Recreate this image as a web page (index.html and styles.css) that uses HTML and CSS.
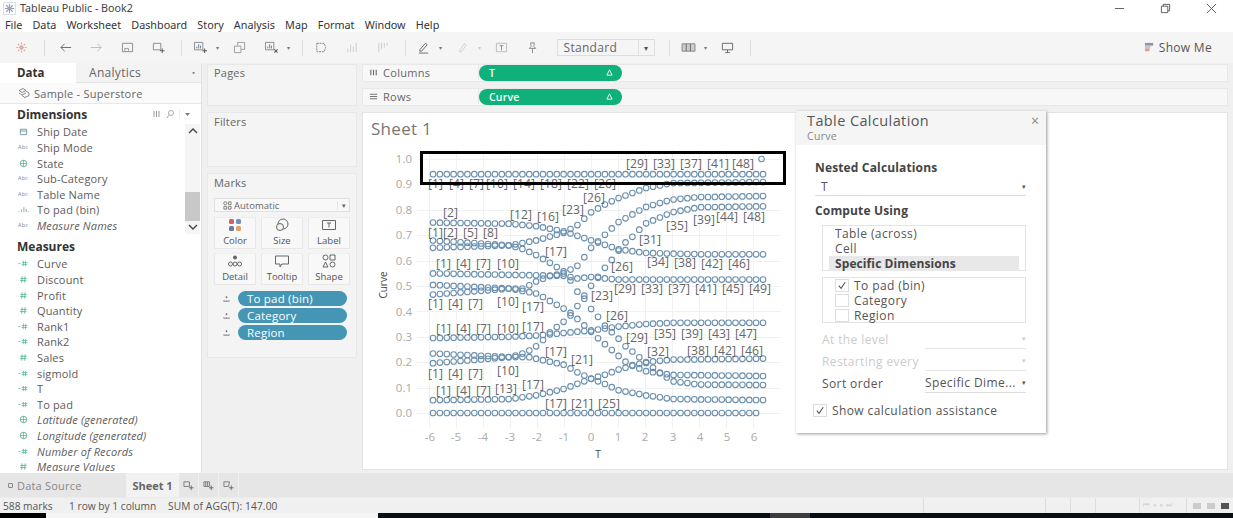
FILE: index.html
```html
<!DOCTYPE html>
<html lang="en">
<head>
<meta charset="utf-8">
<title>Tableau Public - Book2</title>
<link rel="stylesheet" href="styles.css">
</head>
<body>
<svg class="sprite" aria-hidden="true">
  <symbol id="i-num" viewBox="0 0 10 10"><path d="M3.5 1.5 3 8.5M6.8 1.5 6.3 8.5M1.5 3.8h7M1.2 6.2h7" fill="none" stroke="#5fb79a" stroke-width="1"/></symbol>
  <symbol id="i-calc" viewBox="0 0 14 10"><path d="M7 1.5 6.6 8.5M9.8 1.5 9.4 8.5M5 3.8h7M4.8 6.2h7M.5 5h2.5" fill="none" stroke="#5fb79a" stroke-width="1"/></symbol>
  <symbol id="i-globe" viewBox="0 0 10 10"><circle cx="5" cy="5" r="3.6" fill="none" stroke="#5fa88f"/><path d="M1.4 5h7.2M5 1.4v7.2" stroke="#5fa88f" fill="none" stroke-width=".8"/></symbol>
  <symbol id="i-bar" viewBox="0 0 14 10"><path d="M1.5 8v-1M4.5 8V5M7.5 8V2M10.5 8V4M13 8V7" stroke="#6f93a6" stroke-width="1" fill="none"/></symbol>
  <symbol id="i-add" viewBox="0 0 16 14"><path d="M1.5 1.5h9v8h-9z" fill="none" stroke="#888"/><path d="M4 8V6M6 8V3.5M8 8V5" stroke="#5b7f96" stroke-width="1"/><path d="M12.5 8v5M10 10.5h5" stroke="#555" stroke-width="1.1"/></symbol>
  <symbol id="i-dot" viewBox="0 0 12 10"><path d="M6 1.5v2.5M2.5 8h7" stroke="#777" fill="none"/><circle cx="6" cy="2.5" r="1.2" fill="#777"/><path d="M1.5 7.5h2M5 7.5h2M8.5 7.5h2" stroke="#777"/></symbol>
  <symbol id="i-delta" viewBox="0 0 8 8"><path d="M4 1 7 7H1z" fill="none" stroke="#fff" stroke-width="1"/></symbol>
  <symbol id="i-check" viewBox="0 0 12 12"><path d="M2.5 6.2 5 9l4.5-6.5" fill="none" stroke="#555" stroke-width="1.2"/></symbol>
</svg>

<div class="app">
  <header class="titlebar">
    <svg class="logo" viewBox="0 0 14 14"><path d="M.5.5h13v13H.5z" fill="none" stroke="#d5dde3"/><path d="M7 2v10M2 7h10M3.500 3.500l7 7M10.500 3.500l-7 7" stroke="#7ba7c6" stroke-width="1.200"/><path d="M7 5v4M5 7h4" stroke="#d9928c" stroke-width="1.100"/></svg>
    <span class="title">Tableau Public - Book2</span>
    <div class="winctl">
      <svg viewBox="0 0 12 12"><path d="M1 6h10" stroke="#555"/></svg>
      <svg viewBox="0 0 12 12"><path d="M1.5 3.5h7v7h-7zM3.5 3.5v-2h7v7h-2" fill="none" stroke="#555"/></svg>
      <svg viewBox="0 0 12 12"><path d="M1 1l10 10M11 1 1 11" stroke="#555"/></svg>
    </div>
  </header>
  <nav class="menubar">
    <span>File</span><span>Data</span><span>Worksheet</span><span>Dashboard</span><span>Story</span><span>Analysis</span><span>Map</span><span>Format</span><span>Window</span><span>Help</span>
  </nav>
  <div class="toolbar">
    <svg class="tb" viewBox="0 0 14 14"><path d="M7 1.500v11M1.500 7h11M3 3l8 8M11 3l-8 8" stroke="#dba5a1" stroke-width="1.200" stroke-dasharray="2 1"/></svg>
    <i class="sep"></i>
    <svg class="tb tb-back" viewBox="0 0 14 14"><path d="M13 7H2M6 3 2 7l4 4" fill="none" stroke="#666"/></svg>
    <svg class="tb" viewBox="0 0 14 14"><path d="M1 7h11M8 3l4 4-4 4" fill="none" stroke="#bbb"/></svg>
    <svg class="tb" viewBox="0 0 14 14"><path d="M1.5 2.5h11v9h-11z" fill="none" stroke="#888"/><path d="M4 11V8h4v3" fill="none" stroke="#999"/></svg>
    <svg class="tb" viewBox="0 0 14 14"><path d="M1.5 2.5h8v7h-8z" fill="none" stroke="#888"/><path d="M11 8v5M8.5 10.5h5" stroke="#555"/></svg>
    <i class="sep"></i>
    <svg class="tb-s"><use href="#i-add"/></svg><b class="mini">▾</b>
    <svg class="tb" viewBox="0 0 14 14"><path d="M1.5 5.5h7v7h-7zM5 5V1.5h7.5V9H9" fill="none" stroke="#999"/></svg>
    <svg class="tb-s" viewBox="0 0 16 14"><path d="M1.5 1.5h9v8h-9z" fill="none" stroke="#888"/><path d="M4 8V6M6 8V3.5M8 8V5" stroke="#5b7f96"/><path d="M11 9l3.5 3.5M14.5 9 11 12.5" stroke="#555" stroke-width="1.1"/></svg><b class="mini">▾</b>
    <i class="sep"></i>
    <svg class="tb" viewBox="0 0 14 14"><path d="M3 2.5h8l1.5 4.5L11 11.5H3z" fill="none" stroke="#777" stroke-dasharray="2 1"/></svg>
    <svg class="tb" viewBox="0 0 14 14"><path d="M3 12V8M6 12V4M9 12V6M12 12V2" stroke="#ccc" fill="none"/></svg>
    <svg class="tb" viewBox="0 0 14 14"><path d="M3 2v10M6 2v7M9 2v5M12 2v3" stroke="#ccc" fill="none"/></svg>
    <i class="sep"></i>
    <svg class="tb tb-m" viewBox="0 0 14 14"><path d="M3 9.500 9 2.500l2 1.500-6 7H3zM2 13h10" fill="none" stroke="#666"/></svg><b class="mini">▾</b>
    <svg class="tb tb-m" viewBox="0 0 14 14"><path d="M4 10l5-7 2 1.500-5 7-2 0z" fill="none" stroke="#ccc"/></svg><b class="mini light">▾</b>
    <svg class="tb" viewBox="0 0 14 14"><path d="M1.500 2.500h11v9h-11z" fill="none" stroke="#bbb"/><path d="M5 5h4M7 5v5" stroke="#888"/></svg>
    <svg class="tb" viewBox="0 0 14 14"><path d="M5 2h4l-.5 4 2 2H3.500l2-2zM7 8v5" fill="none" stroke="#888"/></svg>
    <div class="fit"><span>Standard</span><b>▾</b></div>
    <i class="sep"></i>
    <svg class="tb-s" viewBox="0 0 16 14"><path d="M1 3h14v8H1z" fill="#ccc" stroke="#888"/><path d="M5.500 3v8M10 3v8" stroke="#666"/></svg><b class="mini">▾</b>
    <svg class="tb" viewBox="0 0 14 14"><path d="M1.500 2.500h11v7h-11zM7 9.500v3M4.500 12.500h5" fill="none" stroke="#666"/></svg>
    <i class="sep"></i>
    <div class="showme">
      <svg viewBox="0 0 12 12"><path d="M1 1h9v3H1z" fill="#8f95a5"/><path d="M1 4h6v3H1z" fill="#c4c6cf"/><path d="M1 7h5v3H1z" fill="#e19a9a"/></svg>
      <span>Show Me</span>
    </div>
  </div>

  <main class="workspace">
    <aside class="datapane">
      <div class="panetabs">
        <span class="tab-on">Data</span>
        <span class="tab-off">Analytics<b>▪</b></span>
      </div>
      <div class="source">
        <svg viewBox="0 0 12 12"><path d="M1 3.500 5 1.500l3 2-4 2zM1 6l3 2 4-2M4 8.500l3 2 4-2V6L8 4" fill="none" stroke="#888"/></svg>
        Sample - Superstore
      </div>
      <div class="dimblock">
        <div class="sechead"><span>Dimensions</span>
          <svg class="headicons" viewBox="0 0 44 10"><path d="M1 2v6M3.500 2v6M6 2v6" stroke="#999"/><circle cx="18" cy="4" r="2.500" fill="none" stroke="#aaa"/><path d="M16 6l-2 3" stroke="#aaa"/><path d="M26.500 0v10" stroke="#eee"/><path d="M32 4h5l-2.500 3z" fill="#777"/></svg>
        </div>
        <div class="scroller">
          <ul class="fields">
            <li><svg viewBox="0 0 10 10"><path d="M1.500 2.500h7v6h-7zM1.500 4.500h7" fill="none" stroke="#6f93a6"/></svg>Ship Date</li>
            <li><i class="abc">Abc</i>Ship Mode</li>
            <li><svg><use href="#i-globe"/></svg>State</li>
            <li><i class="abc">Abc</i>Sub-Category</li>
            <li><i class="abc">Abc</i>Table Name</li>
            <li><svg><use href="#i-bar"/></svg>To pad (bin)</li>
            <li class="ital"><i class="abc">Abc</i>Measure Names</li>
          </ul>
          <div class="scrollbar">
            <svg viewBox="0 0 10 6"><path d="M1 5l4-4 4 4" fill="none" stroke="#444" stroke-width="1.4"/></svg>
            <div class="thumb"></div>
            <svg viewBox="0 0 10 6"><path d="M1 1l4 4 4-4" fill="none" stroke="#444" stroke-width="1.4"/></svg>
          </div>
        </div>
      </div>
      <div class="sechead measures"><span>Measures</span></div>
      <ul class="fields">
        <li><svg><use href="#i-calc"/></svg>Curve</li>
        <li><svg><use href="#i-num"/></svg>Discount</li>
        <li><svg><use href="#i-num"/></svg>Profit</li>
        <li><svg><use href="#i-num"/></svg>Quantity</li>
        <li><svg><use href="#i-calc"/></svg>Rank1</li>
        <li><svg><use href="#i-calc"/></svg>Rank2</li>
        <li><svg><use href="#i-num"/></svg>Sales</li>
        <li><svg><use href="#i-calc"/></svg>sigmold</li>
        <li><svg><use href="#i-calc"/></svg>T</li>
        <li><svg><use href="#i-calc"/></svg>To pad</li>
        <li class="ital"><svg><use href="#i-globe"/></svg>Latitude (generated)</li>
        <li class="ital"><svg><use href="#i-globe"/></svg>Longitude (generated)</li>
        <li class="ital"><svg><use href="#i-calc"/></svg>Number of Records</li>
        <li class="ital"><svg><use href="#i-num"/></svg>Measure Values</li>
      </ul>
    </aside>

    <section class="cards">
      <div class="card card-pages"><h3>Pages</h3></div>
      <div class="card card-filters"><h3>Filters</h3></div>
      <div class="card card-marks">
        <h3>Marks</h3>
        <div class="marktype">
          <svg viewBox="0 0 10 10"><circle cx="2.500" cy="2.500" r="1.700" fill="none" stroke="#777"/><path d="M6 1h3v3H6zM1 6h3v3H1zM6 6h3v3H6z" fill="none" stroke="#777"/></svg>
          <span>Automatic</span><b>▾</b>
        </div>
        <div class="markgrid">
          <div class="markbtn"><svg viewBox="0 0 14 14"><rect x="1" y="1" width="5" height="5" rx="1.500" fill="#d0605e"/><rect x="8" y="1" width="5" height="5" rx="1.500" fill="#6f8fc0"/><rect x="1" y="8" width="5" height="5" rx="1.500" fill="#6b7a99"/><rect x="8" y="8" width="5" height="5" rx="1.500" fill="#e0a06b"/></svg>Color</div>
          <div class="markbtn"><svg viewBox="0 0 14 14"><circle cx="8" cy="6" r="5" fill="none" stroke="#666"/><circle cx="5" cy="9" r="3.500" fill="#f5f5f5" stroke="#666"/></svg>Size</div>
          <div class="markbtn"><svg viewBox="0 0 14 14"><path d="M.5 2.500h13v9H.5z" fill="none" stroke="#666"/><path d="M5 5h4M7 5v4.500" stroke="#666" fill="none"/></svg>Label</div>
          <div class="markbtn"><svg viewBox="0 0 14 14"><circle cx="7" cy="3.500" r="2" fill="#666"/><circle cx="2.500" cy="10" r="2" fill="none" stroke="#666"/><circle cx="7" cy="10" r="2" fill="none" stroke="#666"/><circle cx="11.500" cy="10" r="2" fill="none" stroke="#666"/></svg>Detail</div>
          <div class="markbtn"><svg viewBox="0 0 14 14"><path d="M.5 2h13v8H7l-2 3v-3H.5z" fill="none" stroke="#666"/></svg>Tooltip</div>
          <div class="markbtn"><svg viewBox="0 0 14 14"><circle cx="3.500" cy="3.500" r="2.500" fill="none" stroke="#666"/><path d="M8 1h5v5H8zM3.500 8 6 13H1z" fill="none" stroke="#666"/><circle cx="10.500" cy="10.500" r="2.500" fill="none" stroke="#666"/></svg>Shape</div>
        </div>
        <div class="markpills">
          <div class="pillrow"><svg><use href="#i-dot"/></svg><span class="pill blue">To pad (bin)</span></div>
          <div class="pillrow"><svg><use href="#i-dot"/></svg><span class="pill blue">Category</span></div>
          <div class="pillrow"><svg><use href="#i-dot"/></svg><span class="pill blue">Region</span></div>
        </div>
      </div>
    </section>

    <section class="viz">
      <div class="shelf">
        <div class="shelfname"><svg viewBox="0 0 10 10"><path d="M2 2v6M5 2v6M8 2v6" stroke="#666" stroke-width="1.200"/></svg>Columns</div>
        <span class="pill green">T<svg><use href="#i-delta"/></svg></span>
      </div>
      <div class="shelf">
        <div class="shelfname"><svg viewBox="0 0 10 10"><path d="M1 2.500h8M1 5h8M1 7.500h8" stroke="#666" stroke-width="1"/></svg>Rows</div>
        <span class="pill green">Curve<svg><use href="#i-delta"/></svg></span>
      </div>
      <div class="sheet">
        <h1>Sheet 1</h1>
        <svg id="chart" class="chart" viewBox="362 138 440 332" width="440" height="332">
          <g class="grid" id="grid"></g>
          <g class="axis">
            <text x="412" y="163" text-anchor="end">1.0</text>
            <text x="412" y="188" text-anchor="end">0.9</text>
            <text x="412" y="214" text-anchor="end">0.8</text>
            <text x="412" y="239" text-anchor="end">0.7</text>
            <text x="412" y="265" text-anchor="end">0.6</text>
            <text x="412" y="290" text-anchor="end">0.5</text>
            <text x="412" y="316" text-anchor="end">0.4</text>
            <text x="412" y="341" text-anchor="end">0.3</text>
            <text x="412" y="366" text-anchor="end">0.2</text>
            <text x="412" y="392" text-anchor="end">0.1</text>
            <text x="412" y="417" text-anchor="end">0.0</text>
            <text x="430" y="441" text-anchor="middle">-6</text>
            <text x="456" y="441" text-anchor="middle">-5</text>
            <text x="483" y="441" text-anchor="middle">-4</text>
            <text x="510" y="441" text-anchor="middle">-3</text>
            <text x="537" y="441" text-anchor="middle">-2</text>
            <text x="564" y="441" text-anchor="middle">-1</text>
            <text x="591" y="441" text-anchor="middle">0</text>
            <text x="618" y="441" text-anchor="middle">1</text>
            <text x="645" y="441" text-anchor="middle">2</text>
            <text x="673" y="441" text-anchor="middle">3</text>
            <text x="700" y="441" text-anchor="middle">4</text>
            <text x="727" y="441" text-anchor="middle">5</text>
            <text x="754" y="441" text-anchor="middle">6</text>
          </g>
          <text class="axtitle" x="598" y="458" text-anchor="middle">T</text>
          <text class="axtitle" transform="translate(387 285) rotate(-90)" text-anchor="middle">Curve</text>
          <g id="marks" class="marks"></g>
          <g class="labels">
            <text x="626" y="168">[29]</text><text x="653" y="168">[33]</text><text x="680" y="168">[37]</text><text x="707" y="168">[41]</text><text x="732" y="168">[48]</text>
            <text x="428" y="188">[1]</text><text x="449" y="188">[4]</text><text x="469" y="188">[7]</text><text x="486" y="188">[10]</text><text x="513" y="188">[14]</text><text x="540" y="188">[18]</text><text x="567" y="188">[22]</text><text x="594" y="188">[26]</text>
            <text x="583" y="202">[26]</text><text x="562" y="214">[23]</text><text x="510" y="219">[12]</text><text x="537" y="221">[16]</text><text x="443" y="217">[2]</text>
            <text x="428" y="237">[1]</text><text x="443" y="237">[2]</text><text x="463" y="237">[5]</text><text x="483" y="237">[8]</text>
            <text x="545" y="256">[17]</text><text x="639" y="244">[31]</text><text x="666" y="230">[35]</text><text x="693" y="224">[39]</text><text x="716" y="221">[44]</text><text x="743" y="221">[48]</text>
            <text x="436" y="268">[1]</text><text x="456" y="268">[4]</text><text x="476" y="268">[7]</text><text x="497" y="268">[10]</text>
            <text x="611" y="271">[26]</text><text x="647" y="266">[34]</text><text x="674" y="267">[38]</text><text x="701" y="268">[42]</text><text x="728" y="268">[46]</text>
            <text x="614" y="293">[29]</text><text x="641" y="293">[33]</text><text x="668" y="293">[37]</text><text x="695" y="293">[41]</text><text x="722" y="293">[45]</text><text x="749" y="293">[49]</text>
            <text x="591" y="300">[23]</text>
            <text x="428" y="308">[1]</text><text x="448" y="308">[4]</text><text x="468" y="308">[7]</text><text x="497" y="306">[10]</text><text x="522" y="311">[17]</text>
            <text x="606" y="320">[26]</text>
            <text x="436" y="333">[1]</text><text x="456" y="333">[4]</text><text x="476" y="333">[7]</text><text x="497" y="333">[10]</text><text x="522" y="331">[17]</text>
            <text x="626" y="342">[29]</text><text x="654" y="338">[35]</text><text x="681" y="338">[39]</text><text x="708" y="338">[43]</text><text x="735" y="338">[47]</text>
            <text x="545" y="356">[17]</text><text x="647" y="356">[32]</text><text x="687" y="355">[38]</text><text x="714" y="355">[42]</text><text x="741" y="355">[46]</text>
            <text x="571" y="364">[21]</text>
            <text x="428" y="378">[1]</text><text x="448" y="378">[4]</text><text x="468" y="378">[7]</text><text x="497" y="375">[10]</text>
            <text x="436" y="395">[1]</text><text x="456" y="395">[4]</text><text x="476" y="395">[7]</text><text x="495" y="393">[13]</text><text x="522" y="389">[17]</text>
            <text x="545" y="408">[17]</text><text x="571" y="408">[21]</text><text x="598" y="408">[25]</text>
          </g>
          <rect class="annot" x="421.500" y="152.500" width="363" height="31"/>
        </svg>
      </div>
    </section>
  </main>

  <aside class="calc">
    <div class="calc-head">
      <div class="calc-title">Table Calculation</div>
      <div class="calc-sub">Curve</div>
      <span class="calc-x">×</span>
    </div>
    <div class="calc-body">
      <h4>Nested Calculations</h4>
      <div class="dd dd-wide"><span>T</span><b>▾</b></div>
      <h4 class="h-compute">Compute Using</h4>
      <div class="listbox lb-one">
        <div>Table (across)</div>
        <div>Cell</div>
        <div class="selected">Specific Dimensions</div>
      </div>
      <div class="listbox lb-two">
        <label><i class="cb"><svg><use href="#i-check"/></svg></i>To pad (bin)</label>
        <label><i class="cb"></i>Category</label>
        <label><i class="cb"></i>Region</label>
      </div>
      <div class="optrow off"><span>At the level</span><div class="dd"><span></span><b>▾</b></div></div>
      <div class="optrow off"><span>Restarting every</span><div class="dd"><span></span><b>▾</b></div></div>
      <div class="optrow"><span>Sort order</span><div class="dd"><span>Specific Dime...</span><b>▾</b></div></div>
      <label class="assist"><i class="cb"><svg><use href="#i-check"/></svg></i>Show calculation assistance</label>
    </div>
  </aside>

  <div class="tabbar">
    <span class="dstab"><i></i>Data Source</span>
    <span class="sheettab">Sheet 1</span>
    <span class="newtab"><svg viewBox="0 0 12 12"><path d="M1 2h6v5H1z" fill="none" stroke="#777"/><path d="M9 6v5M6.500 8.500h5" stroke="#666"/></svg></span>
    <span class="newtab"><svg viewBox="0 0 12 12"><path d="M1 2h6v5H1zM3 2v5M5 2v5" fill="none" stroke="#777"/><path d="M9 6v5M6.500 8.500h5" stroke="#666"/></svg></span>
    <span class="newtab"><svg viewBox="0 0 12 12"><path d="M1 2h6l-1 5H1z" fill="none" stroke="#777"/><path d="M9 6v5M6.500 8.500h5" stroke="#666"/></svg></span>
  </div>
  <footer class="statusbar">
    <span class="st1">588 marks</span><span class="st2">1 row by 1 column</span><span class="st3">SUM of AGG(T): 147.00</span>
    <div class="stcells">
      <i class="c1"></i><i class="c2"></i><i class="c3"></i><i class="c4"></i><i class="c5"></i>
      <div class="pager">⏮ ◂ ▸ ⏭</div>
      <div class="views"><u></u><u></u><u class="on"></u></div>
    </div>
  </footer>
  <div class="taskbar"><i class="b1"></i><i class="b2"></i><i class="b3"></i><i class="b4"></i><i class="b5"></i></div>
</div>
<script src="chart.js"></script>
</body>
</html>
```
FILE: styles.css
```css
* { box-sizing: border-box; }
html, body { margin: 0; padding: 0; }
body { width: 1233px; height: 518px; overflow: hidden; background: #fff; color: #555; font: 11.500px "Open Sans", "Noto Sans", sans-serif; }
ul { list-style: none; margin: 0; padding: 0; }
h1, h3, h4 { margin: 0; font-weight: 400; }
i, em { font-style: normal; }
u { text-decoration: none; display: block; }
.sprite { display: none; }
.app { position: relative; display: flex; flex-direction: column; width: 1233px; height: 518px; }

.titlebar { flex: 0 0 16px; display: flex; align-items: center; padding-left: 3px; font: 10.700px "Noto Sans", sans-serif; color: #444; }
.logo { width: 13px; height: 13px; margin-right: 4px; }
.winctl { margin-left: auto; display: flex; gap: 35px; padding-right: 16px; }
.winctl svg { width: 11px; height: 11px; }
.menubar { flex: 0 0 16px; display: flex; gap: 10.200px; padding: 1px 0 0 5px; align-items: center; font: 10.800px "Noto Sans", sans-serif; color: #333; }

.toolbar { flex: 0 0 31px; display: flex; align-items: center; background: #f5f5f5; padding-left: 15px; }
.tb { width: 13px; height: 13px; margin-right: 18px; flex: none; }
.tb-back { margin-left: 2.500px; }
.tb-m { margin-right: 9.500px; }
.tb-s { width: 15px; height: 13px; margin-right: 8.500px; flex: none; }
.sep { flex: none; width: 1px; height: 16px; background: #ddd; margin: 0 11px 0 -2px; }
.mini { flex: none; font-size: 6px; color: #777; margin-right: 10.500px; width: 6px; font-weight: 400; }
.mini.light { color: #ccc; }
.fit { flex: none; position: relative; display: flex; align-items: center; justify-content: space-between; width: 98px; height: 17px; margin: 0 16px 0 0; border: 1px solid #ddd; padding: 0 5px 0 6px; font-size: 12px; color: #666; letter-spacing: .3px; }
.fit b { font-size: 8px; font-weight: 400; color: #555; border-left: 1px solid #e2e2e2; padding-left: 5px; line-height: 15px; }
.showme { margin-left: auto; display: flex; align-items: center; gap: 4px; padding-right: 21px; font-size: 12px; color: #555; letter-spacing: .3px; }
.showme svg { width: 11px; height: 11px; }

.workspace { flex: 0 0 410px; min-height: 0; overflow: hidden; display: flex; background: #f0f0f0; }
.datapane { flex: 0 0 202px; background: #fff; border-right: 1px solid #e3e3e3; overflow: hidden; }
.panetabs { height: 20px; display: flex; background: #f3f3f3; }
.tab-on { width: 76px; background: #fff; padding: 0 0 0 17px; line-height: 19px; font-weight: 700; font-size: 11.500px; color: #333; }
.tab-off { flex: 1; display: flex; justify-content: space-between; padding: 0 6px 0 13px; line-height: 19px; color: #666; border-bottom: 1px solid #e3e3e3; font-size: 12px; letter-spacing: .3px; }
.tab-off b { font-size: 7px; color: #777; font-weight: 400; }
.source { height: 21px; display: flex; align-items: center; gap: 4px; padding-left: 18px; border-bottom: 1px solid #e8e8e8; background: #fafafa; color: #666; font-size: 11px; letter-spacing: .25px; }
.source svg { width: 12px; height: 12px; }
.sechead { height: 20px; display: flex; align-items: center; justify-content: space-between; padding: 0 4px 0 17px; font-weight: 700; font-size: 12px; color: #333; }
.headicons { width: 44px; height: 10px; margin-right: 0; }
.dimblock { height: 132px; }
.scroller { display: flex; height: 110px; }
.scroller .fields { flex: 1; }
.scrollbar { flex: 0 0 15px; display: flex; flex-direction: column; background: #f5f5f5; margin-right: 1px; }
.scrollbar svg { width: 10px; height: 6px; margin: 4px auto 0; flex: none; }
.thumb { margin-top: auto; height: 29px; background: #c8c8c8; margin-bottom: 3px; }
.scrollbar svg:last-child { margin: 0 auto 4px; }
.fields li { height: 15.620px; display: flex; align-items: center; padding-left: 18px; font-size: 11px; color: #5c5c5c; letter-spacing: .15px; white-space: nowrap; }
.fields svg, .fields .abc { flex: none; width: 11px; height: 9px; margin-right: 8px; }
.fields .abc { font-size: 5.500px; line-height: 9px; color: #6f8a99; }
.fields .ital { font-style: italic; }

.cards { flex: 0 0 160px; padding: 1px 0 0 5px; display: flex; flex-direction: column; gap: 6px; }
.card { background: #f4f4f4; border: 1px solid #e8e8e8; padding: 2px 6px; width: 150px; flex: none; }
.card h3 { font-size: 11px; color: #666; line-height: 14px; letter-spacing: .2px; }
.card-pages { height: 42px; padding-top: 1px; }
.card-filters { height: 55px; }
.card-marks { height: 185px; }
.marktype { display: flex; align-items: center; width: 136px; height: 14px; margin-top: 8px; border: 1px solid #e0e0e0; background: #f8f8f8; padding: 0 3px 0 8px; font-size: 9.500px; color: #666; }
.marktype svg { width: 9px; height: 9px; margin-right: 2px; }
.marktype b { margin-left: auto; font-size: 7px; font-weight: 400; border-left: 1px solid #e5e5e5; padding-left: 4px; }
.markgrid { display: grid; grid-template-columns: repeat(3, 42px); gap: 4px 5px; margin-top: 5px; }
.markbtn { height: 32px; background: #f8f8f8; border: 1px solid #e8e8e8; border-top-color: #eee; display: flex; flex-direction: column; align-items: center; justify-content: flex-end; gap: 2px; font-size: 9.500px; color: #555; padding-bottom: 1px; }
.markbtn svg { width: 14px; height: 14px; }
.markpills { display: flex; flex-direction: column; gap: 2px; margin-top: 6px; }
.pillrow { display: flex; align-items: center; padding-left: 8px; }
.pillrow svg { width: 9px; height: 8px; margin-right: 7px; }
.pill { display: flex; align-items: center; border-radius: 8px; color: #fff; height: 15px; font-size: 11.500px; letter-spacing: .2px; }
.pill.blue { width: 109px; background: #4596b5; padding-left: 9px; }
.pill.green { width: 143px; height: 16px; background: #0fb07a; padding: 0 9px 0 10px; justify-content: space-between; font-weight: 600; font-size: 10.500px; }
.pill.green svg { width: 7px; height: 7px; }

.viz { flex: 1; padding: 1px 5px 0 0; display: flex; flex-direction: column; gap: 6px; }
.shelf { height: 18px; display: flex; align-items: center; background: #f7f7f7; border: 1px solid #e8e8e8; padding-bottom: 1px; }
.shelfname { flex: 0 0 116px; display: flex; align-items: center; gap: 5px; padding-left: 6px; height: 100%; border-right: 1px solid #e5e5e5; font-size: 11px; color: #666; letter-spacing: .3px; }
.shelfname svg { width: 9px; height: 9px; }
.sheet { position: relative; height: 358px; background: #fff; border: 1px solid #e3e3e3; }
.sheet h1 { font-size: 17px; line-height: 24px; padding: 4px 0 0 8px; color: #777; letter-spacing: .3px; }
.chart { position: absolute; left: -1px; top: 25px; display: block; }
.grid path { stroke: #f1f1f1; stroke-width: 1; fill: none; }
.axis text { font-size: 11.500px; fill: #aaa; }
.axtitle { font-size: 10px; fill: #444; }
.marks circle { fill: none; stroke: #6a8fae; stroke-width: 1.100; }
.labels text { font-size: 12.200px; fill: #666; }
.annot { fill: none; stroke: #000; stroke-width: 3; }

.calc { position: absolute; left: 796px; top: 111px; width: 250px; height: 322px; background: #fff; box-shadow: 1px 1px 3px #999; z-index: 2; }
.calc-head { position: relative; height: 34px; background: #f5f5f5; padding: 1px 0 0 11px; }
.calc-title { font-size: 14.500px; color: #555; line-height: 18px; letter-spacing: .4px; }
.calc-sub { font-size: 10.500px; color: #888; line-height: 13px; letter-spacing: .3px; }
.calc-x { position: absolute; right: 7px; top: 0; font-size: 14px; color: #888; }
.calc-body { padding: 16px 20px 0 19px; font-size: 12px; color: #555; letter-spacing: .4px; }
.calc-body h4 { font-size: 12px; font-weight: 700; color: #444; line-height: 14px; letter-spacing: .15px; }
.h-compute { margin-top: 8px; }
.dd { display: flex; justify-content: space-between; align-items: center; border-bottom: 1px solid #ddd; height: 18px; }
.dd b { font-size: 7px; font-weight: 400; color: #555; }
.dd-wide { margin-top: 3px; padding-left: 6px; }
.listbox { margin-left: 7px; border: 1px solid #e4e4e4; }
.lb-one { margin-top: 7px; height: 46px; padding: 0 6px; }
.lb-one div { height: 15px; line-height: 15px; padding-left: 6px; }
.lb-one .selected { background: #e8e8e8; font-weight: 700; color: #444; letter-spacing: .1px; }
.lb-two { margin-top: 6px; height: 46px; padding: 0 0 0 12px; }
.lb-two label { display: flex; align-items: center; height: 15px; }
.cb { display: block; width: 14px; height: 13px; border: 1px solid #ddd; margin-right: 5px; flex: none; }
.cb svg { display: block; width: 12px; height: 11px; }
.optrow { display: flex; align-items: center; justify-content: space-between; margin-left: 7px; height: 22px; white-space: nowrap; }
.optrow .dd { width: 101px; height: 20px; }
.optrow.off { color: #ccc; }
.optrow.off .dd { border-bottom-color: #e6e6e6; }
.optrow.off b { color: #ccc; }
.lb-two + .optrow { margin-top: 5px; }
.assist { display: flex; align-items: center; margin: 8px 0 0 -2px; }

.tabbar { flex: 0 0 24px; display: flex; background: #e6e6e6; color: #777; font-size: 11px; }
.dstab { width: 126px; display: flex; align-items: center; gap: 4px; padding-left: 8px; letter-spacing: .2px; color: #888; }
.dstab i { width: 5px; height: 5px; border: 1px solid #888; border-radius: 1px; }
.sheettab { width: 53px; display: flex; align-items: center; justify-content: center; background: #f2f2f2; font-weight: 700; color: #666; }
.newtab { width: 20px; display: flex; align-items: center; justify-content: center; border-right: 1px solid #f0f0f0; }
.newtab svg { width: 11px; height: 11px; }
.statusbar { position: relative; flex: 0 0 16px; display: flex; align-items: center; background: #f0f0f0; font-size: 10.200px; color: #555; border-top: 1px solid #ebebeb; padding-left: 3px; white-space: nowrap; }
.st1 { width: 66px; }
.st2 { width: 99px; }
.st3 { letter-spacing: .12px; }
.stcells i { position: absolute; top: 0; bottom: 0; width: 1px; background: #ddd; }
.c1 { left: 923px; } .c2 { left: 1045px; } .c3 { left: 1070px; } .c4 { left: 1095px; } .c5 { left: 1139px; }
.pager { position: absolute; left: 1143px; top: 2px; font-size: 7px; color: #d0d0d0; word-spacing: 2px; }
.views { position: absolute; left: 1186px; top: 0; bottom: 0; width: 47px; border-left: 1px solid #ddd; display: flex; gap: 6px; align-items: center; padding-left: 6px; }
.views u { width: 8px; height: 6px; background: #ccc; }
.views .on { background: #555; }
.taskbar { flex: 0 0 5px; display: flex; }
.taskbar i { display: block; height: 5px; }
.b1 { width: 46px; background: #000; }
.b2 { width: 332px; background: #f5f5f5; }
.b3 { width: 392px; background: #0a0d14; }
.b4 { width: 40px; background: #3c3c3c; }
.b5 { flex: 1; background: #0a0d14; }
```
FILE: chart.js
```js
(function () {
  var NS = 'http://www.w3.org/2000/svg';
  var X0 = 591, XS = 27, Y0 = 413, YS = 254;
  var curves = [
    [[-6, .94], [7, .94]],
    [[-6, 0], [7, 0]],
    [[-6, .75], [-3, .745], [-2, .735], [-1, .715], [0, .68], [1, .645], [2, .63], [4, .625], [7, .625]],
    [[-6, .68], [-3, .66], [-2, .68], [-1, .71], [-.5, .74], [0, .79], [.5, .82], [1, .845], [2, .885], [3, .905], [7, .91]],
    [[-6, .65], [-3, .66], [-2.5, .645], [-2, .62], [-1.5, .59], [-1.2, .57], [-.9, .55], [-.7, .51], [-.49, .475], [-.25, .45], [0, .41], [.25, .38], [.5, .345], [.75, .32], [1.05, .29], [1.25, .265], [1.5, .245], [2, .2], [3, .125], [4, .112], [7, .11]],
    [[-6, .55], [-1, .54], [-.5, .53], [0, .535], [1, .525], [7, .525]],
    [[-6, .505], [-3, .49], [-2.5, .49], [-2, .52], [-1.5, .54], [-1, .55], [-.5, .58], [-.2, .62], [0, .65], [.5, .7], [1, .75], [2, .81], [3, .84], [4, .85], [7, .855]],
    [[-6, .465], [-3, .49], [-2, .47], [-1.5, .44], [-1, .41], [-.7, .39], [-.5, .37], [0, .32], [.3, .29], [.8, .245], [1.3, .2], [2, .165], [3, .15], [7, .145]],
    [[-6, .295], [-3, .3], [-2, .305], [-1, .315], [0, .325], [1, .34], [2, .35], [3, .355], [7, .355]],
    [[-6, .235], [-3, .22], [-2.5, .235], [-2.2, .25], [-2, .265], [-1.8, .285], [-1.5, .32], [-1, .36], [-.7, .39], [-.45, .43], [-.2, .47], [0, .5], [.5, .57], [.75, .6], [1.2, .665], [1.5, .69], [2, .745], [3, .79], [4, .81], [7, .815]],
    [[-6, .195], [-3, .22], [-2.3, .22], [-1, .19], [-.5, .16], [0, .135], [.5, .115], [1, .09], [2, .07], [3, .055], [7, .05]],
    [[-6, .05], [-3, .055], [-2, .07], [-1, .095], [-.5, .115], [0, .135], [.5, .15], [1, .17], [1.5, .185], [2, .2], [3, .21], [7, .215]]
  ];

  function valueAt(pts, t) {
    for (var i = 1; i < pts.length; i++) {
      if (t <= pts[i][0]) {
        var a = pts[i - 1], b = pts[i];
        return a[1] + (b[1] - a[1]) * (t - a[0]) / (b[0] - a[0]);
      }
    }
    return pts[pts.length - 1][1];
  }

  function dot(parent, px, py) {
    var c = document.createElementNS(NS, 'circle');
    c.setAttribute('cx', px.toFixed(1));
    c.setAttribute('cy', py.toFixed(1));
    c.setAttribute('r', '2.8');
    parent.appendChild(c);
  }

  var marks = document.getElementById('marks');
  curves.forEach(function (pts, k) {
    var n = k === 1 ? 48 : 49;
    for (var i = 0; i < n; i++) {
      var px = 433 + i * 6.875;
      dot(marks, px, Y0 - valueAt(pts, (px - X0) / XS) * YS);
    }
  });
  dot(marks, 761.5, Y0 - YS);

  var grid = document.getElementById('grid');
  var d = '';
  for (var v = 0; v <= 10; v++) {
    var y = Math.round(Y0 - v * YS / 10) + .5;
    d += 'M417 ' + y + 'H781';
  }
  for (var t = -6; t <= 6; t++) {
    var x = Math.round(X0 + t * XS) + .5;
    d += 'M' + x + ' 150V428';
  }
  var p = document.createElementNS(NS, 'path');
  p.setAttribute('d', d);
  grid.appendChild(p);
})();
```
